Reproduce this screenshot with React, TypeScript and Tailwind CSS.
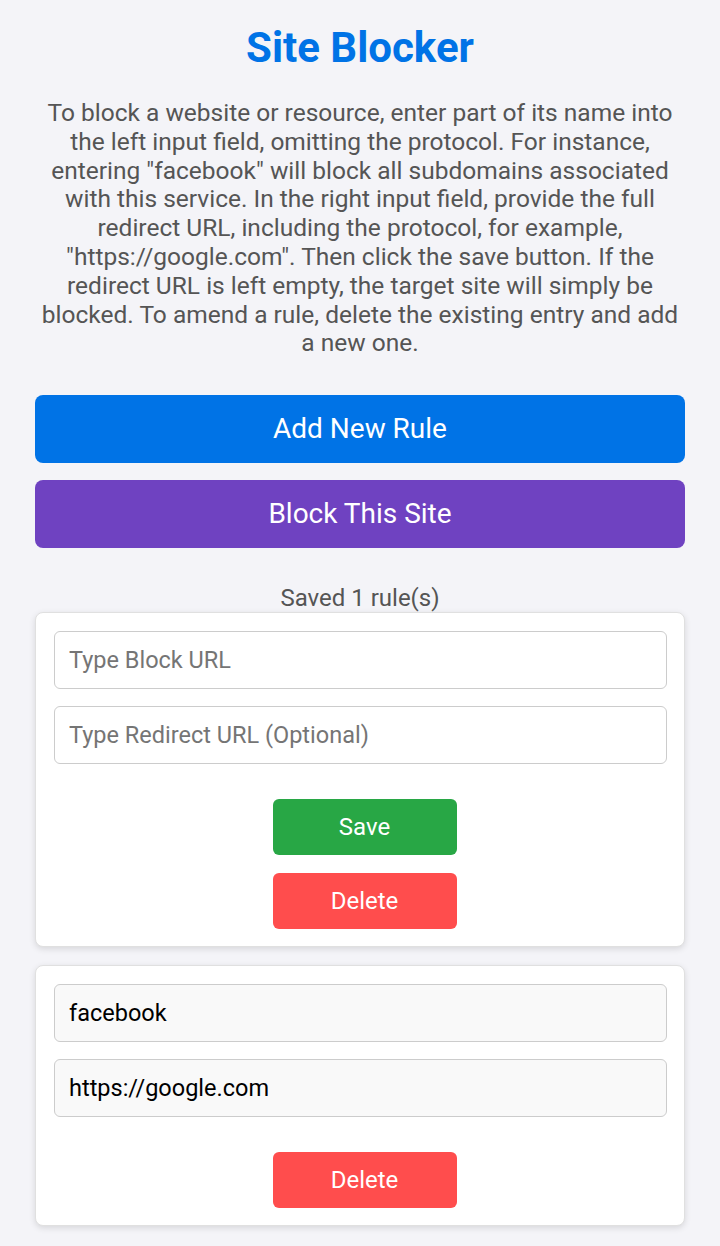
import { useState } from 'react';

type Rule = { block: string; redirect: string };

function RuleCard({ rule, editable }: { rule?: Rule; editable?: boolean }) {
  const [block, setBlock] = useState(rule?.block ?? '');
  const [redirect, setRedirect] = useState(rule?.redirect ?? '');
  const inputBase =
    'block w-full h-[58px] rounded-[6px] border border-[#cccccc] px-[14px] text-[23.5px] text-black placeholder:text-[#757575] outline-none';

  return (
    <div className="rounded-[8px] border border-[#e0e0e0] bg-white pl-[18px] pr-[17px] pt-[18px] pb-[17px] shadow-[0_2px_6px_rgba(0,0,0,0.12)]">
      <input
        className={`${inputBase} ${editable ? 'bg-white' : 'bg-[#f9f9f9]'}`}
        placeholder="Type Block URL"
        value={block}
        readOnly={!editable}
        onChange={(e) => setBlock(e.target.value)}
      />
      <input
        className={`${inputBase} mt-[17px] ${editable ? 'bg-white' : 'bg-[#f9f9f9]'}`}
        placeholder="Type Redirect URL (Optional)"
        value={redirect}
        readOnly={!editable}
        onChange={(e) => setRedirect(e.target.value)}
      />
      <div className="mt-[35px] flex flex-col items-center gap-[18px] pl-[8px]">
        {editable && (
          <button className="h-[56px] w-[184px] rounded-[6px] bg-[#28a745] text-[24px] text-white">
            Save
          </button>
        )}
        <button className="h-[56px] w-[184px] rounded-[6px] bg-[#ff4d4d] text-[24px] text-white">
          Delete
        </button>
      </div>
    </div>
  );
}

export default function App() {
  const rules: Rule[] = [{ block: 'facebook', redirect: 'https://google.com' }];

  return (
    <div className="min-h-screen bg-[#f4f4f8] font-['Roboto',sans-serif]">
      <div className="mx-[35px] pt-[24px] pb-[20px]">
        <h1 className="text-center text-[42px] leading-[48px] font-bold text-[#0073e6]">
          Site Blocker
        </h1>
        <p className="mt-[27px] text-center text-[24.5px] leading-[28.8px] text-[#555555]">
          To block a website or resource, enter part of its name into the left input field,
          omitting the protocol. For instance, entering "facebook" will block all subdomains
          associated with this service. In the right input field, provide the full redirect URL,
          including the protocol, for example, "https://google.com". Then click the save button.
          If the redirect URL is left empty, the target site will simply be blocked. To amend a
          rule, delete the existing entry and add a new one.
        </p>

        <div className="mt-[37px] flex flex-col gap-[17px]">
          <button className="h-[68px] w-full rounded-[8px] bg-[#0073e6] text-[28px] text-white">
            Add New Rule
          </button>
          <button className="h-[68px] w-full rounded-[8px] bg-[#6f42c1] text-[28px] text-white">
            Block This Site
          </button>
        </div>

        <div className="mt-[38px] text-center text-[24px] leading-[24px] text-[#555555]">
          Saved {rules.length} rule(s)
        </div>

        <div className="mt-[2px] flex flex-col gap-[18px]">
          <RuleCard editable />
          {rules.map((r) => (
            <RuleCard key={r.block} rule={r} />
          ))}
        </div>
      </div>
    </div>
  );
}
